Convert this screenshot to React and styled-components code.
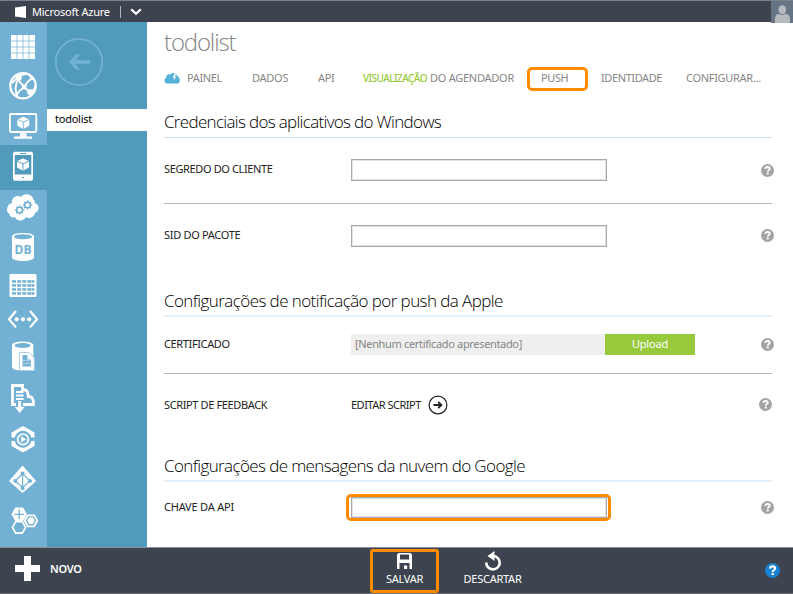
import React from 'react';
import styled, { createGlobalStyle } from 'styled-components';

const C = {
  dark: '#3e444f',
  rail: '#72b1d3',
  panel: '#509bbc',
  orange: '#ff8c00',
  green: '#97c93d',
  grey: '#868686',
  ink: '#222',
};

const Global = createGlobalStyle`
  * { box-sizing: border-box; }
  body { margin: 0; background: #fff; font-family: "Noto Sans", "Open Sans", sans-serif; }
  button, input { font: inherit; }
`;

const Shell = styled.div`
  width: 793px;
  height: 594px;
  display: grid;
  grid-template-rows: 22px 525px 47px;
  overflow: hidden;
  background: #fff;
`;

const TopBar = styled.header`
  display: flex;
  align-items: center;
  background: ${C.dark};
  border-top: 1px solid #79818a;
  padding-left: 15px;
  color: #fff;
`;

const Brand = styled.span`
  font-size: 11px;
  line-height: 20px;
  letter-spacing: -0.22px;
  margin-left: 6px;
  width: 78px;
  white-space: nowrap;
`;

const Divider = styled.i`
  width: 1px;
  height: 12px;
  margin: 0 9px 0 10px;
  background: #b4b8bd;
`;

const Avatar = styled.div`
  margin-left: auto;
  width: 22px;
  height: 22px;
  background: #667486;
  svg { display: block; }
`;

const Body = styled.div`
  display: grid;
  grid-template-columns: 47px 100px 1fr;
  min-height: 0;
`;

const Rail = styled.nav`
  display: flex;
  flex-direction: column;
  background: ${C.rail};
`;

const RailButton = styled.button`
  display: block;
  border: 0;
  padding: 0;
  width: 47px;
  height: ${(p) => p.$h}px;
  background: ${(p) => (p.$active ? C.panel : 'transparent')};
  svg { display: block; }
`;

const Panel = styled.aside`
  background: ${C.panel};
  display: flex;
  flex-direction: column;
`;

const BackButton = styled.button`
  border: 0;
  padding: 0;
  margin: 15px 0 22px 7px;
  width: 50px;
  height: 50px;
  background: none;
  svg { display: block; }
`;

const PanelItem = styled.div`
  height: 22px;
  padding-left: 8px;
  background: #fff;
  color: #000;
  font-size: 11px;
  line-height: 20px;
  letter-spacing: -0.25px;
`;

const Main = styled.main`
  padding: 0 0 0 17px;
  min-width: 0;
`;

const Title = styled.h1`
  margin: 0;
  height: 45px;
  font-family: "Open Sans", sans-serif;
  font-size: 24px;
  font-weight: 300;
  line-height: 39px;
  letter-spacing: -1.15px;
  color: #858585;
`;

const Tabs = styled.nav`
  height: 24px;
  display: grid;
  grid-template-rows: 24px;
  grid-template-columns: 88px 66px 45px 164px 74px 85px 1fr;
  align-items: center;
  color: ${C.grey};
  font-size: 11px;
  line-height: 14px;
  white-space: nowrap;
`;

const Tab = styled.a`
  display: flex;
  align-items: center;
  padding-bottom: 3px;
  letter-spacing: ${(p) => p.$ls || '-0.4px'};
  svg { margin-right: 6px; }
`;

const Preview = styled.span`
  color: ${C.green};
  font-size: 10px;
  font-weight: 500;
  letter-spacing: -0.55px;
  margin-right: 3px;
  padding-top: 1px;
`;

const ActiveTab = styled(Tab)`
  width: 61px;
  height: 24px;
  padding-left: 11px;
  border: 3px solid ${C.orange};
  border-radius: 5px;
`;

const SectionTitle = styled.h2`
  margin: 0;
  width: 608px;
  height: ${(p) => p.$h}px;
  display: flex;
  align-items: flex-end;
  padding-bottom: ${(p) => p.$pb || 2}px;
  border-bottom: ${(p) => p.$line || 1}px solid ${(p) => (p.$line === 2 ? '#e3eff8' : '#cbdde8')};
  font-family: "Open Sans", sans-serif;
  font-size: 17px;
  font-weight: 300;
  line-height: 24px;
  letter-spacing: ${(p) => p.$ls || '-0.5px'};
  color: #000;
  white-space: nowrap;
`;

const Row = styled.div`
  width: ${(p) => p.$w || 610}px;
  height: ${(p) => p.$h}px;
  padding-bottom: ${(p) => p.$pb || 0}px;
  display: grid;
  grid-template-columns: 187px 1fr 13px;
  align-items: center;
`;

const Rule = styled.hr`
  margin: 0;
  width: 608px;
  height: 1px;
  border: 0;
  background: #b5b5b5;
`;

const Label = styled.label`
  font-size: 11px;
  line-height: 14px;
  padding-bottom: ${(p) => p.$lift ?? 1}px;
  letter-spacing: ${(p) => p.$ls || '-0.37px'};
  color: ${C.ink};
  white-space: nowrap;
`;

const Input = styled.input`
  display: block;
  width: 256px;
  height: 22px;
  padding: 0 4px;
  border: 1px solid #a8a8a8;
  box-shadow: inset 0 0 0 1px #e2e2e2;
  border-radius: 0;
  background: #fff;
  outline: 0;
`;

const Highlight = styled.div`
  width: 265px;
  height: 27px;
  margin-left: -5px;
  border: 3px solid ${C.orange};
  border-radius: 5px;
  padding: 0 1px 0 2px;
  ${Input} { height: 21px; }
`;

const FilePicker = styled.div`
  display: flex;
  height: 21px;
  font-size: 11px;
  line-height: 19px;
`;

const FileName = styled.span`
  width: 254px;
  padding-left: 4px;
  background: #efefef;
  color: ${C.grey};
  letter-spacing: -0.34px;
`;

const Upload = styled.button`
  width: 90px;
  border: 0;
  padding: 0 0 2px;
  background: ${C.green};
  color: #fff;
  line-height: 19px;
  letter-spacing: -0.2px;
`;

const ScriptLink = styled.a`
  display: flex;
  align-items: center;
  gap: 7px;
  ${Label} { width: 70px; }
`;

const Footer = styled.footer`
  background: ${C.dark};
  border-top: 1px solid #8b8f95;
  border-bottom: 1px solid #6b7078;
  display: grid;
  grid-template-columns: 370px 69px 107px 1fr;
  color: #fff;
  font-size: 11px;
`;

const NewButton = styled.div`
  display: flex;
  align-items: center;
  gap: 10px;
  padding: 0 0 4px 15px;
  font-weight: 600;
  letter-spacing: -0.3px;
`;

const Command = styled.div`
  height: 44px;
  margin-top: ${(p) => (p.$on ? 1 : 0)}px;
  display: flex;
  flex-direction: column;
  align-items: center;
  gap: ${(p) => (p.$on ? 2 : 1)}px;
  border: 3px solid ${(p) => (p.$on ? C.orange : 'transparent')};
  border-radius: 3px;
  line-height: 14px;
  letter-spacing: -0.25px;
  svg { display: block; }
`;

const FooterHelp = styled.div`
  display: flex;
  justify-content: flex-end;
  align-items: center;
  padding-right: 13px;
`;

const Help = ({ size = 13, color = '#a3a3a3' }) => (
  <svg width={size} height={size} viewBox="0 0 14 14">
    <circle cx="7" cy="7" r="7" fill={color} />
    <path d="M4.700 5.300C4.800 3.900 5.800 3.200 7.100 3.200c1.400 0 2.300.7 2.300 1.800 0 1.600-2.200 1.600-2.200 3.400" fill="none" stroke="#fff" strokeWidth="2" />
    <rect x="6.100" y="9.300" width="2.200" height="2" fill="#fff" />
  </svg>
);

const Cube = ({ x, y, bg }) => (
  <g>
    <path d={`M${x} ${y - 6}l6 2.600v6.400l-6 3.300-6-3.300v-6.400z`} fill="#fff" />
    <path d={`M${x - 6} ${y - 3.4}l6 2.800 6-2.800M${x} ${y - 0.600}v7`} fill="none" stroke={bg} strokeWidth="0.9" />
  </g>
);

const hex = (x, y, r) =>
  `M${x - r} ${y}L${x - r / 2} ${y - r * 0.87}H${x + r / 2}L${x + r} ${y}L${x + r / 2} ${y + r * 0.87}H${x - r / 2}Z`;

const Gear = ({ x, y, r }) => (
  <g stroke={C.rail} fill="none">
    <circle cx={x} cy={y} r={r} strokeWidth="1.500" />
    {[0, 45, 90, 135, 180, 225, 270, 315].map((a) => (
      <path key={a} d={`M${x} ${y - r}v-1.800`} strokeWidth="1.400" transform={`rotate(${a} ${x} ${y})`} />
    ))}
  </g>
);

/* Each entry covers one vertical slot of the rail; artwork shares the page's y axis. */
const services = [
  { id: 'all', top: 22, h: 44, art: (
    <>
      <rect x="11" y="35" width="24" height="24" fill="#fff" />
      <path d="M17 35v24M23 35v24M29 35v24M11 41h24M11 47h24M11 53h24" stroke={C.rail} strokeWidth="0.7" />
    </>
  ) },
  { id: 'web', top: 66, h: 40, art: (
    <g fill="none" stroke="#fff">
      <circle cx="23" cy="85.700" r="12.700" strokeWidth="2.200" />
      <path d="M12 83L19.500 75.500L27 73.500M18 79.500L24.500 87.500L30 92M18 79.500C15 85 14.800 91 17.500 97M24.500 87.500C20 89.500 17.500 93 16.500 96M25 86C27 82 30 79 34 78M30 92C33 91 35 89 35.500 86M28 74L34 80" strokeWidth="1.900" />
      <g fill="#fff" stroke="none">
        <circle cx="18.500" cy="77.500" r="3.200" />
        <circle cx="24.200" cy="87" r="2.400" />
        <circle cx="30.200" cy="92.200" r="2.900" />
      </g>
    </g>
  ) },
  { id: 'vm', top: 106, h: 39, art: (
    <>
      <rect x="9.900" y="114" width="26.400" height="18" rx="1.200" fill="none" stroke="#fff" strokeWidth="1.800" />
      <path d="M20 132h6.500v4.500H32v2.200H14v-2.200h6z" fill="#fff" />
      <Cube x={23.3} y={122.8} bg={C.rail} />
    </>
  ) },
  { id: 'mobile', top: 145, h: 45, active: true, art: (
    <>
      <rect x="13" y="151.700" width="20" height="29" rx="2" fill="#fff" />
      <rect x="14.700" y="155" width="16.600" height="19.500" fill={C.panel} />
      <path d="M20 153.500h6M22 177.500h2" stroke={C.panel} strokeWidth="1.200" />
      <Cube x={23} y={164.5} bg={C.panel} />
    </>
  ) },
  { id: 'cloud', top: 190, h: 37, art: (
    <>
      <path d="M12 203c-1-5 5-9 9-6 3-5 12-3 12.500 3 1 0 1.500 1 1.200 3 5 1 5.300 8 .3 10-1 5-7 6-9 4-2 4-9 5-11 0-3 1.500-5.500-.5-5.500-3-4-2-3-10 2.500-11z" fill="#fff" />
      <Gear x={19.500} y={210} r={2.8} />
      <Gear x={27.500} y={205} r={2.8} />
    </>
  ) },
  { id: 'db', top: 227, h: 39, art: (
    <>
      <path d="M12 236.500c0-4.600 22-4.600 22 0v21c0 4.600-22 4.600-22 0z" fill="#fff" />
      <ellipse cx="23" cy="236.700" rx="9.200" ry="2.500" fill={C.rail} />
      <text x="23" y="254" textAnchor="middle" fontFamily="Open Sans" fontSize="12" fontWeight="700" fill={C.rail}>DB</text>
    </>
  ) },
  { id: 'table', top: 266, h: 36, art: (
    <>
      <rect x="9.500" y="274" width="27" height="23" rx="1" fill="#fff" />
      {[280.2, 284.2, 288.2, 292.2].map((y) =>
        [12, 17.1, 22.2, 27.3, 31.5].map((x) => (
          <rect key={x + '-' + y} x={x} y={y} width={x > 30 ? 3 : 4} height="2.500" fill={C.rail} />
        )))}
    </>
  ) },
  { id: 'bus', top: 302, h: 35, art: (
    <>
      <path d="M16 311l-7 8.200 7 8.200M30 311l7 8.200-7 8.200" fill="none" stroke="#fff" strokeWidth="2.200" />
      <g fill="#fff"><circle cx="16.700" cy="319.300" r="2.100" /><circle cx="23" cy="319.300" r="2.100" /><circle cx="29.200" cy="319.300" r="2.100" /></g>
    </>
  ) },
  { id: 'sql', top: 337, h: 40, art: (
    <>
      <path d="M12 345c0-4.800 21.300-4.800 21.300 0v22c0 4.800-21.300 4.800-21.300 0z" fill="#fff" />
      <ellipse cx="22.600" cy="345.500" rx="8" ry="2.400" fill={C.rail} />
      <path d="M19.500 352.500h9.500l5.300 5.500V370.500H19.500z" fill="#fff" stroke="#a9d0e5" strokeWidth="1" />
      <path d="M22.500 355h5v4.500H31v7h-8.500z" fill={C.rail} />
      <path d="M22.500 360.300h8.500M22.500 363.300h8.500" stroke="#fff" strokeWidth="0.5" />
    </>
  ) },
  { id: 'import', top: 377, h: 41, art: (
    <>
      <path d="M16 404.500H12.500V385.500H22.500v4c5 0 5.500 3 5.800 7 4 0 5.500 3 5.200 8H23" fill="none" stroke="#fff" strokeWidth="2.800" />
      <path d="M16 392h7.500M16 395.500h7.500M16 399h7.500" stroke="#fff" strokeWidth="1.900" />
      <path d="M18.200 401h3v6h3.300l-4.800 6-4.800-6h3.300z" fill="#fff" />
    </>
  ) },
  { id: 'media', top: 418, h: 41, art: (
    <>
      <path d="M11.500 437.500V432.500L23 426l11.500 6.500v5h-3.200a8.500 8.500 0 0 0-16.600 0zM11.500 441v5L23 452.500 34.500 446v-5h-3.200a8.500 8.500 0 0 1-16.600 0z" fill="#fff" />
      <circle cx="23" cy="439.300" r="5.300" fill="none" stroke="#fff" strokeWidth="1.700" />
      <path d="M21.200 436l5 3.300-5 3.300z" fill="#fff" />
    </>
  ) },
  { id: 'ad', top: 459, h: 41, art: (
    <>
      <path d="M22.600 465.500l13.500 15.500-13.500 12L9 481z" fill="#fff" />
      <path d="M22.600 474v14.500M22.600 473.500l-7.300 7.500 7.300 6.500 7.300-6.500z" fill="none" stroke={C.rail} strokeWidth="1.200" />
      <g fill={C.rail}><circle cx="22.600" cy="473.500" r="2" /><circle cx="15.300" cy="481" r="2" /><circle cx="30" cy="481" r="2" /><circle cx="22.600" cy="488.200" r="2" /></g>
    </>
  ) },
  { id: 'biz', top: 500, h: 47, art: (
    <>
      <path d={hex(19.2, 514.3, 7.8)} fill="#fff" />
      <path d="M14.500 514.300h9.400M19.200 509.600v9.400" stroke={C.rail} strokeWidth="1.300" />
      <path d={hex(31, 520.8, 6.3)} fill="none" stroke="#fff" strokeWidth="1.800" />
      <path d={hex(31, 520.8, 3.8)} fill="#fff" />
      <path d={hex(19, 527.3, 6.6)} fill="none" stroke="#fff" strokeWidth="1.700" />
    </>
  ) },
];

export default function App() {
  return (
    <Shell>
      <Global />
      <TopBar>
        <svg width="11" height="12" viewBox="0 0 11 12"><path d="M0 1.500L11 0v12L0 10.600z" fill="#fff" /></svg>
        <Brand>Microsoft Azure</Brand>
        <Divider />
        <svg width="12" height="8" viewBox="0 0 12 8"><path d="M1.200 1.200L6 5.800l4.800-4.600" fill="none" stroke="#fff" strokeWidth="2.200" /></svg>
        <Avatar>
          <svg width="22" height="22" viewBox="0 0 22 22">
            <path d="M4 22v-4q0-5 4-5 3 2 6 0 5 0 5 5v4z" fill="#b5babf" />
            <ellipse cx="11.300" cy="8.800" rx="3.900" ry="4.500" fill="#b5babf" />
          </svg>
        </Avatar>
      </TopBar>

      <Body>
        <Rail>
          {services.map((s) => (
            <RailButton key={s.id} $h={s.h} $active={s.active}>
              <svg width="47" height={s.h} viewBox={`0 ${s.top} 47 ${s.h}`}>{s.art}</svg>
            </RailButton>
          ))}
        </Rail>

        <Panel>
          <BackButton>
            <svg width="50" height="50" viewBox="0 0 50 50" fill="none" stroke={C.rail}>
              <circle cx="25" cy="25" r="23.200" strokeWidth="1.800" />
              <path d="M36 25H18" strokeWidth="3.600" />
              <path d="M26.500 17.200h-4.400L14.800 25l7.300 7.800h4.400L19.500 25z" fill={C.rail} stroke="none" />
            </svg>
          </BackButton>
          <PanelItem>todolist</PanelItem>
        </Panel>

        <Main>
          <Title>todolist</Title>
          <Tabs>
            <Tab $ls="-0.35px">
              <svg width="17" height="12" viewBox="0 0 17 12">
                <path d="M3 11.500C0 11.500-.3 6.500 2.300 5.800 2 3 4.500 1.500 6.300 2.800 7.500.2 12.500.2 13 4c3.200.3 4 6.500 1 7.500z" fill="#56b1d9" />
                <path d="M10.800 1L8.600 5.800h1.700L9.500 8.800 12.300 4.800h-1.500L12.300 1z" fill="#fff" />
              </svg>
              PAINEL
            </Tab>
            <Tab $ls="-0.25px">DADOS</Tab>
            <Tab>API</Tab>
            <Tab $ls="-0.25px"><Preview>VISUALIZAÇÃO</Preview>DO AGENDADOR</Tab>
            <ActiveTab>PUSH</ActiveTab>
            <Tab>IDENTIDADE</Tab>
            <Tab $ls="-0.3px">CONFIGURAR...</Tab>
          </Tabs>

          <SectionTitle $h={47} $pb={3} $ls="-0.68px">Credenciais dos aplicativos do Windows</SectionTitle>
          <Row $h={65} $pb={1}>
            <Label $lift={3}>SEGREDO DO CLIENTE</Label>
            <Input />
            <Help />
          </Row>
          <Rule />
          <Row $h={64} $pb={1}>
            <Label $ls="-0.3px">SID DO PACOTE</Label>
            <Input />
            <Help />
          </Row>

          <SectionTitle $h={49} $line={2} $ls="-0.58px">Configurações de notificação por push da Apple</SectionTitle>
          <Row $h={56} $pb={1}>
            <Label>CERTIFICADO</Label>
            <FilePicker>
              <FileName>[Nenhum certificado apresentado]</FileName>
              <Upload>Upload</Upload>
            </FilePicker>
            <Help />
          </Row>
          <Rule />
          <Row $h={61} $w={608}>
            <Label $lift={0}>SCRIPT DE FEEDBACK</Label>
            <ScriptLink>
              <Label $lift={0} $ls="-0.5px">EDITAR SCRIPT</Label>
              <svg width="20" height="20" viewBox="0 0 20 20" fill="none" stroke="#222">
                <circle cx="10" cy="10" r="8.900" strokeWidth="1.200" />
                <path d="M5.500 10h8M10.200 6.800l3.200 3.200-3.200 3.200" strokeWidth="1.800" />
              </svg>
            </ScriptLink>
            <Help />
          </Row>

          <SectionTitle $h={47} $line={2} $ls="-0.61px">Configurações de mensagens da nuvem do Google</SectionTitle>
          <Row $h={51}>
            <Label $ls="-0.2px">CHAVE DA API</Label>
            <Highlight><Input /></Highlight>
            <Help />
          </Row>
        </Main>
      </Body>

      <Footer>
        <NewButton>
          <svg width="25" height="25" viewBox="0 0 25 25"><path d="M9 0h7v9h9v7h-9v9H9v-9H0V9h9z" fill="#fff" /></svg>
          NOVO
        </NewButton>
        <Command $on>
          <svg width="17" height="18" viewBox="0 0 17 18">
            <path d="M2.500 1h12l1.500 1.500V17H1V2.500z" fill="#fff" />
            <path d="M4 2.500h9v5H4zM3.500 11h10v6h-2.300v-3.500H8V17H3.500z" fill={C.dark} />
          </svg>
          SALVAR
        </Command>
        <Command>
          <svg width="20" height="20" viewBox="0 0 20 20">
            <path d="M10.500 5a6.700 6.700 0 1 1-7.200 6.500" fill="none" stroke="#fff" strokeWidth="2.600" />
            <path d="M11.500 0v10L4.500 5z" fill="#fff" />
          </svg>
          DESCARTAR
        </Command>
        <FooterHelp><Help size={15} color="#1883d3" /></FooterHelp>
      </Footer>
    </Shell>
  );
}
